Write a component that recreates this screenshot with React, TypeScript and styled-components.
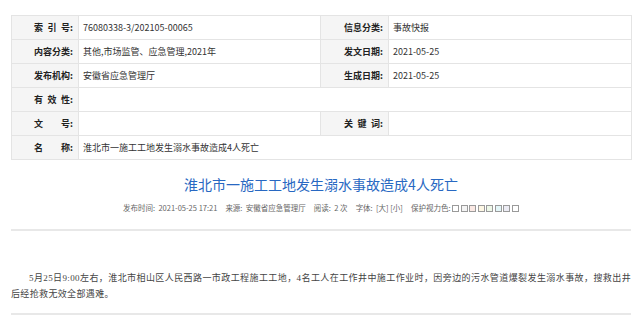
import React from "react";
import styled, { createGlobalStyle } from "styled-components";

const GlobalStyle = createGlobalStyle`
  html, body { margin: 0; padding: 0; background: #ffffff; }
  body { font-family: "Liberation Sans", "Noto Sans CJK SC", sans-serif; color: #333; }
`;

const Page = styled.div`
  width: 620px;
  margin-left: 11px;
  padding-top: 15px;
`;

const InfoTable = styled.table`
  width: 620px;
  border-collapse: collapse;
  table-layout: fixed;
  border: 1px solid #e4e4e4;
`;

const Label = styled.th`
  height: 23px;
  padding: 0 5px 0 0;
  background: #f5f5f5;
  border: 1px solid #e4e4e4;
  text-align: right;
  font-size: 9px;
  font-weight: bold;
  color: #222;
  white-space: pre;
  font-family: "Noto Sans CJK SC", sans-serif;
`;

const Value = styled.td`
  height: 23px;
  padding: 0 0 0 4px;
  border: 1px solid #e4e4e4;
  font-size: 9px;
  color: #333;
  font-family: "Noto Sans CJK SC", sans-serif;
`;

const Title = styled.h1`
  margin: 15px 0 0;
  text-align: center;
  font-size: 14px;
  line-height: 18px;
  font-weight: normal;
  color: #2868c2;
  font-family: "Noto Sans CJK SC", sans-serif;
`;

const Meta = styled.div`
  margin-top: 10px;
  display: flex;
  justify-content: center;
  align-items: center;
  gap: 8px;
  font-size: 7.5px;
  line-height: 10px;
  color: #666;
  font-family: "Noto Sans CJK SC", sans-serif;
`;

const MetaItem = styled.span`
  white-space: pre;
`;

const Swatches = styled.span`
  display: inline-flex;
  gap: 1.5px;
  margin-left: 2px;
  vertical-align: middle;
`;

const Swatch = styled.span<{ $c: string }>`
  width: 5px;
  height: 5px;
  border: 1px solid #9a9a9a;
  background: ${(p) => p.$c};
`;

const Divider = styled.div`
  margin-top: 16px;
  height: 2px;
  background: #e8e8e8;
`;

const Article = styled.p`
  margin: 39px 0 0;
  font-family: "Liberation Serif", "Noto Sans CJK SC", serif;
  font-size: 9px;
  line-height: 16px;
  letter-spacing: 0.35px;
  text-indent: 18px;
  text-align: justify;
  color: #444;
`;

const BottomDivider = styled.div`
  margin-top: 11px;
  height: 2px;
  background: #e8e8e8;
`;

const swatchColors = ["#ffffff", "#f4f4f4", "#fbe9e4", "#fdf7e4", "#eef8e8", "#e4f6f8", "#ececf4", "#ffffff"];

export default function App() {
  return (
    <>
      <GlobalStyle />
      <Page>
        <InfoTable>
          <colgroup>
            <col style={{ width: 67 }} />
            <col style={{ width: 242 }} />
            <col style={{ width: 68 }} />
            <col style={{ width: 243 }} />
          </colgroup>
          <tbody>
            <tr>
              <Label>索{"\u2002"}引{"\u2002"}号:</Label>
              <Value>76080338-3/202105-00065</Value>
              <Label>信息分类:</Label>
              <Value>事故快报</Value>
            </tr>
            <tr>
              <Label>内容分类:</Label>
              <Value>其他,市场监管、应急管理,2021年</Value>
              <Label>发文日期:</Label>
              <Value>2021-05-25</Value>
            </tr>
            <tr>
              <Label>发布机构:</Label>
              <Value>安徽省应急管理厅</Value>
              <Label>生成日期:</Label>
              <Value>2021-05-25</Value>
            </tr>
            <tr>
              <Label>有{"\u2002"}效{"\u2002"}性:</Label>
              <Value colSpan={3}></Value>
            </tr>
            <tr>
              <Label>文　　号:</Label>
              <Value></Value>
              <Label>关{"\u2002"}键{"\u2002"}词:</Label>
              <Value></Value>
            </tr>
            <tr>
              <Label>名　　称:</Label>
              <Value colSpan={3}>淮北市一施工工地发生溺水事故造成4人死亡</Value>
            </tr>
          </tbody>
        </InfoTable>
        <Title>淮北市一施工工地发生溺水事故造成4人死亡</Title>
        <Meta>
          <MetaItem>发布时间:  2021-05-25 17:21</MetaItem>
          <MetaItem>来源:  安徽省应急管理厅</MetaItem>
          <MetaItem>阅读:  2 次</MetaItem>
          <MetaItem>字体:  [大] [小]</MetaItem>
          <MetaItem>
            保护视力色:
            <Swatches>
              {swatchColors.map((c, i) => (
                <Swatch key={i} $c={c} />
              ))}
            </Swatches>
          </MetaItem>
        </Meta>
        <Divider />
        <Article>
          5月25日9:00左右，淮北市相山区人民西路一市政工程施工工地，4名工人在工作井中施工作业时，因旁边的污水管道爆裂发生溺水事故，搜救出井后经抢救无效全部遇难。
        </Article>
        <BottomDivider />
      </Page>
    </>
  );
}
